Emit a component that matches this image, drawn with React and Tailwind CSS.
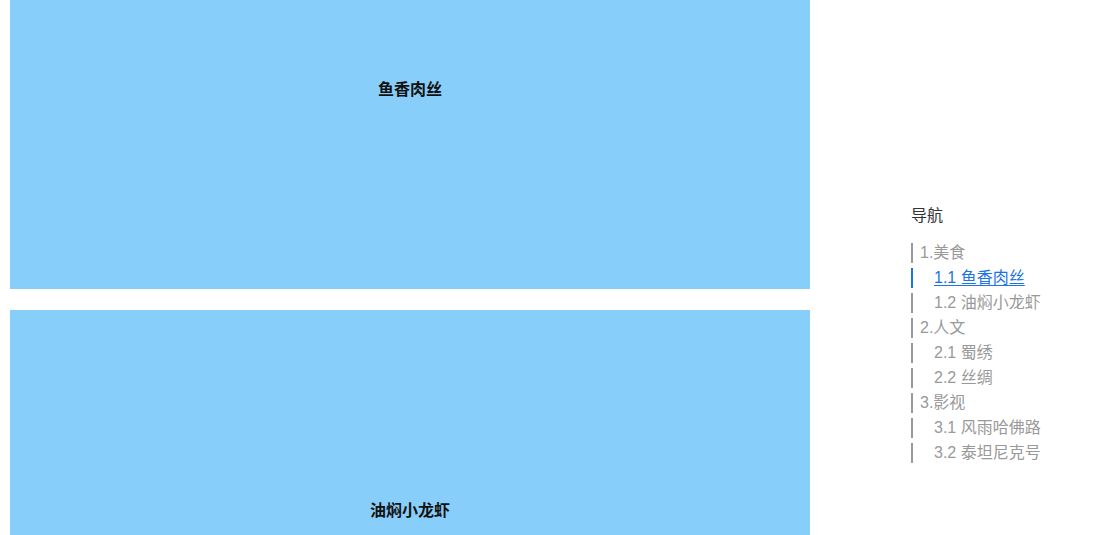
const FONT = { fontFamily: '"Liberation Sans", "Noto Sans CJK SC", sans-serif' };

const NAV = [
  { label: '1.美食', level: 1 },
  { label: '1.1 鱼香肉丝', level: 2, active: true },
  { label: '1.2 油焖小龙虾', level: 2 },
  { label: '2.人文', level: 1 },
  { label: '2.1 蜀绣', level: 2 },
  { label: '2.2 丝绸', level: 2 },
  { label: '3.影视', level: 1 },
  { label: '3.1 风雨哈佛路', level: 2 },
  { label: '3.2 泰坦尼克号', level: 2 },
];

export default function App() {
  return (
    <div className="w-[1114px] h-[535px] overflow-hidden bg-white flex" style={FONT}>
      {/* content column */}
      <div className="pl-[10px] flex flex-col gap-[21px] shrink-0">
        <section className="shrink-0 w-[800px] h-[289px] bg-[#87cefa] flex justify-center pt-[80px]">
          <h2 className="text-[16px] font-bold text-[#111] leading-[20px]">鱼香肉丝</h2>
        </section>
        <section className="shrink-0 w-[800px] h-[260px] bg-[#87cefa] flex justify-center pt-[191px]">
          <h2 className="text-[16px] font-bold text-[#111] leading-[20px]">油焖小龙虾</h2>
        </section>
      </div>

      {/* side nav */}
      <nav className="ml-[101px] pt-[206px]">
        <div className="text-[16px] leading-[20px] text-[#333]">导航</div>
        <ul className="mt-[17px] flex flex-col gap-[5px]">
          {NAV.map((item) => (
            <li
              key={item.label}
              className={
                'h-[20px] leading-[20px] text-[16px] border-l-2 ' +
                (item.level === 1 ? 'pl-[7px] ' : 'pl-[21px] ') +
                (item.active ? 'border-[#1a73e8] text-[#1a73e8] underline underline-offset-2' : 'border-[#999] text-[#999]')
              }
            >
              {item.label}
            </li>
          ))}
        </ul>
      </nav>
    </div>
  );
}
